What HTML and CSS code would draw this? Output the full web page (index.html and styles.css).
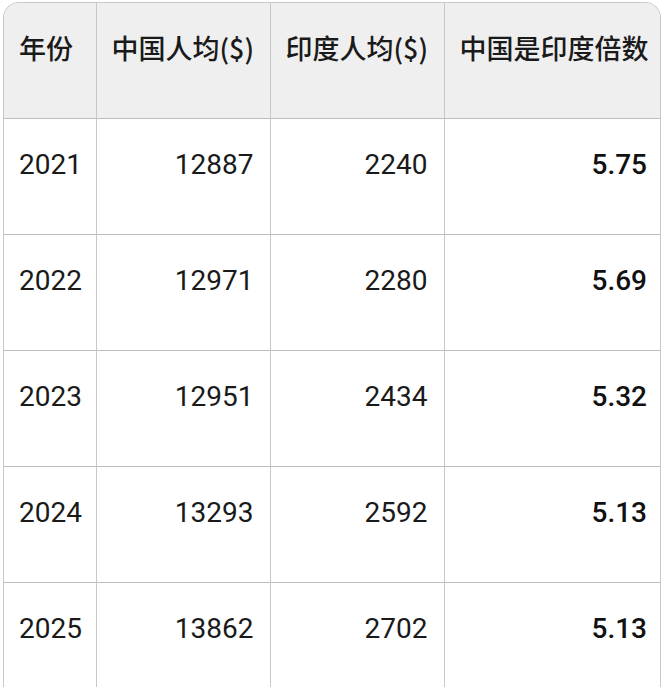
FILE: index.html
```html
<!DOCTYPE html>
<html lang="zh">
<head>
<meta charset="utf-8">
<link rel="stylesheet" href="styles.css">
</head>
<body>
<div class="wrap">
<table class="data">
<colgroup><col class="c1"><col class="c2"><col class="c3"><col class="c4"></colgroup>
<thead>
<tr><th class="left">年份</th><th class="left">中国人均($)</th><th class="left">印度人均($)</th><th class="left">中国是印度倍数</th></tr>
</thead>
<tbody>
<tr><td class="left">2021</td><td>12887</td><td>2240</td><td class="bold">5.75</td></tr>
<tr><td class="left">2022</td><td>12971</td><td>2280</td><td class="bold">5.69</td></tr>
<tr><td class="left">2023</td><td>12951</td><td>2434</td><td class="bold">5.32</td></tr>
<tr><td class="left">2024</td><td>13293</td><td>2592</td><td class="bold">5.13</td></tr>
<tr><td class="left">2025</td><td>13862</td><td>2702</td><td class="bold">5.13</td></tr>
</tbody>
</table>
</div>
</body>
</html>
```
FILE: styles.css
```css
html, body { margin: 0; padding: 0; background: #fff; }
body { font-family: Roboto, "Noto Sans CJK SC", sans-serif; color: #1a1a1a; }
.wrap {
  margin: 2px 0 0 3px;
  width: 656px;
  border: 1px solid #c8c8c8;
  border-bottom: none;
  border-radius: 16px 16px 0 0;
  overflow: hidden;
}
.data { border-collapse: collapse; table-layout: fixed; width: 656px; font-size: 28px; }
.c1 { width: 92px; } .c2 { width: 174px; } .c3 { width: 174px; } .c4 { width: 216px; }
.data th, .data td {
  box-sizing: border-box;
  height: 116px;
  vertical-align: top;
  padding: 30px 16px 0 15px;
  line-height: 32px;
  text-align: right;
  border-left: 1px solid #c8c8c8;
  border-top: 1px solid #bdbdbd;
  white-space: nowrap;
}
.data th { height: 115px; padding-top: 29px; border-top: none; background: #efefef; font-size: 27px; font-weight: 500; font-family: "Noto Sans CJK SC", Roboto, sans-serif; color: #1a1a1a; }
.data th:first-child, .data td:first-child { border-left: none; }
.data td:last-child { padding-right: 13px; }
.data .left { text-align: left; }
.data .bold { font-weight: 500; color: #111; }
```
